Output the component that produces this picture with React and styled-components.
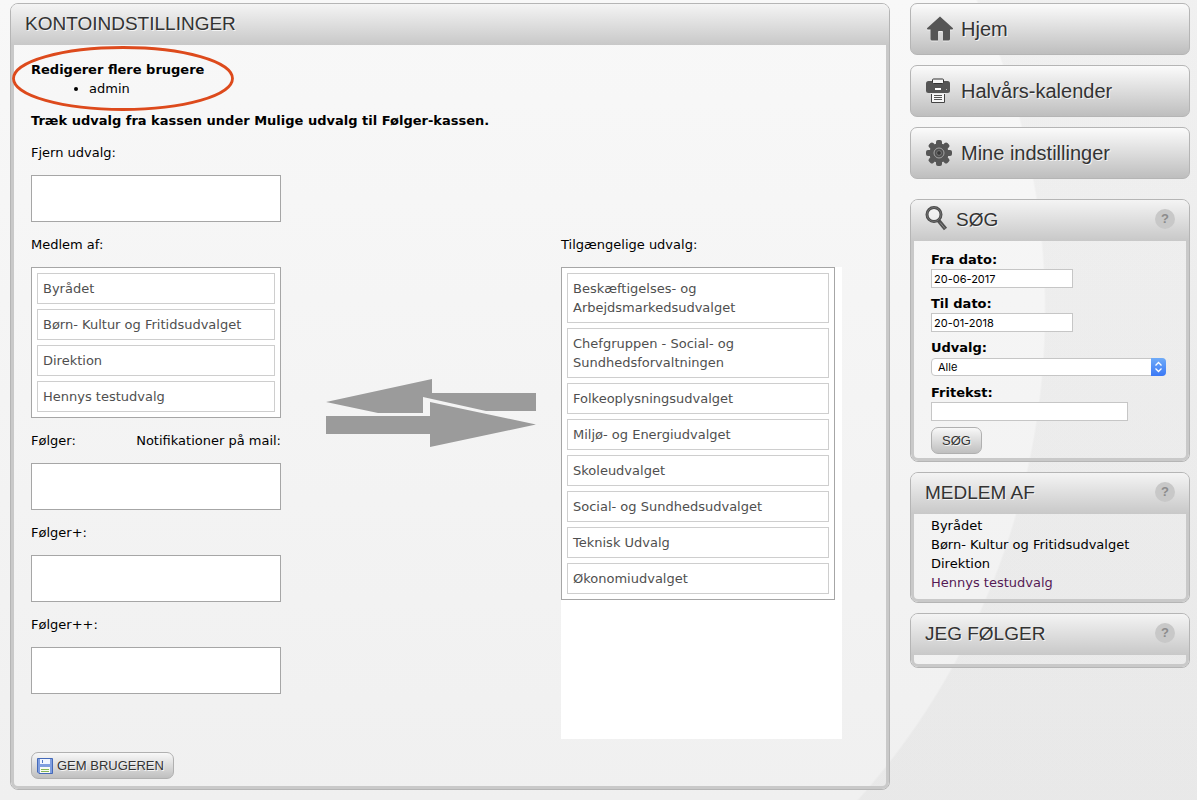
import React from "react";
import styled, { createGlobalStyle, css } from "styled-components";

const GlobalStyle = createGlobalStyle`
  *, *::before, *::after { box-sizing: border-box; }
  html { min-height: 100%; background: #f0f0f0; }
  body {
    margin: 0;
    font-family: "DejaVu Sans", Verdana, sans-serif;
    font-size: 13px;
    line-height: 19px;
    color: #000;
    background:
      radial-gradient(circle at 310px 310px, transparent 734px, rgba(0, 0, 0, 0.03) 736px) no-repeat,
      linear-gradient(#f8f8f8, #f0f0f0);
  }
  h2, p, ul { margin: 0; padding: 0; }
`;

const sans = css`font-family: "Liberation Sans", Arial, sans-serif;`;

const Page = styled.div`
  display: grid;
  grid-template-columns: minmax(0, 1fr) 280px;
  align-items: start;
  gap: 20px;
  padding: 3px 7px 10px 10px;
`;

const Sidebar = styled.aside`
  display: flex;
  flex-direction: column;
  gap: 10px;
`;

const Nav = styled.nav`
  display: flex;
  flex-direction: column;
  gap: 10px;
  margin-bottom: 10px;
`;

const NavLink = styled.a`
  ${sans}
  display: flex;
  align-items: center;
  gap: 7px;
  height: 52px;
  padding: 0 15px;
  border: 1px solid #b5b5b5;
  border-radius: 7px;
  background: linear-gradient(#fbfbfb, #bebebe);
  color: #333;
  font-size: 20px;
  text-decoration: none;
  text-shadow: 1px 1px 0 #f4f4f4;
`;

const Panel = styled.section`
  border: 1px solid #b5b5b5;
  border-radius: 8px;
  overflow: hidden;
`;

const PanelHeader = styled.header`
  display: flex;
  align-items: center;
  gap: 8px;
  height: 41px;
  padding: 0 14px 3px;
  background: linear-gradient(#f4f4f4, #c8c8c8);
`;

const PanelTitle = styled.h2`
  ${sans}
  flex: 1;
  font-size: 19px;
  font-weight: 400;
  color: #333;
  text-shadow: 1px 1px 0 #f4f4f4;
`;

const PanelBody = styled.div`
  min-height: 12px;
  padding: ${(p) => p.$pad || "0"};
  border: 3px solid #c9c9c9;
  border-top: 0;
  border-radius: 0 0 7px 7px;
`;

const HelpButton = styled.button`
  ${sans}
  width: 20px;
  height: 20px;
  padding: 0;
  border: 0;
  border-radius: 50%;
  background: #c8c8c8;
  color: #8c8c8c;
  font-size: 13px;
  font-weight: 700;
  line-height: 20px;
`;

const Intro = styled.div`
  position: relative;
  margin-bottom: 13px;
`;

const Marker = styled.svg`
  position: absolute;
  left: -19px;
  top: -14px;
  pointer-events: none;
`;

const Strong = styled.p`font-weight: 700;`;

const UserList = styled.ul`
  padding-left: 58px;
`;

const Instruction = styled(Strong)`margin-bottom: 13px;`;

const Group = styled.section`
  display: flex;
  flex-direction: column;
  gap: 13px;
  margin-bottom: ${(p) => (p.$last ? "0" : "13px")};
`;

const GroupLabel = styled.div`
  display: flex;
  justify-content: space-between;
  width: 250px;
`;

const DropList = styled.ul`
  display: flex;
  flex-direction: column;
  gap: 5px;
  width: ${(p) => (p.$wide ? "274px" : "250px")};
  min-height: 47px;
  padding: 5px;
  border: 1px solid #a6a6a6;
  background: #fff;
  list-style: none;
`;

const DropItem = styled.li`
  padding: 5px;
  border: 1px solid #cecece;
  background: #fff;
  color: #4f4f4f;
  cursor: move;
`;

const Transfer = styled.div`
  display: grid;
  grid-template-columns: 250px 280px 281px;
  margin-bottom: 13px;
`;

const ArrowCell = styled.div`
  padding: 143px 0 0 44px;
`;

const Available = styled.div`
  min-height: 472px;
  background: #fff;
`;

const ActionButton = styled.button`
  ${sans}
  display: inline-flex;
  align-items: center;
  gap: 3px;
  height: 27px;
  padding: ${(p) => (p.$icon ? "0 9px 0 5px" : "0 10px")};
  border: 1px solid #b0b0b0;
  border-radius: 7px;
  background: linear-gradient(#f8f8f8, #bfbfbf);
  color: #333;
  font-size: 13px;
  text-shadow: 1px 1px 0 #f4f4f4;
`;

const SearchForm = styled.form`
  display: flex;
  flex-direction: column;
  align-items: flex-start;
  gap: 6px;
`;

const Field = styled.div`
  display: flex;
  flex-direction: column;
  width: ${(p) => p.$width};
`;

const FieldLabel = styled.label`font-weight: 700;`;

const control = css`
  width: 100%;
  border: 1px solid #c6c6c6;
  background: #fff;
  color: #000;
  font-family: Inter, sans-serif;
  font-size: 11px;
`;

const TextInput = styled.input`
  ${control}
  height: 19px;
  padding: 1px 2px 0;
`;

const SelectWrap = styled.div`
  position: relative;
  height: 20px;
  padding: 1px 0;
`;

const Select = styled.select`
  ${control}
  display: block;
  height: 18px;
  padding: 0 20px 0 6px;
  border-radius: 4px;
  appearance: none;
`;

const SelectArrow = styled.svg`
  position: absolute;
  right: 0;
  top: 1px;
  pointer-events: none;
`;

const MemberList = styled.ul`list-style: none;`;

const MemberLink = styled.a`
  color: ${(p) => (p.$visited ? "#551a55" : "#000")};
  text-decoration: none;
`;

const HomeIcon = () => (
  <svg width="28" height="28" viewBox="0 0 28 28" aria-hidden="true">
    <path d="M14 1.5 L27 13.3 Q27.3 14.5 26 14.5 H24 V24 Q24 25.5 22.5 25.5 H17 V17 Q17 16 16 16 H13 Q12 16 12 17 V25.5 H6 Q4.5 25.5 4.5 24 V14.5 H2 Q.7 14.5 1 13.3Z" fill="#fff" opacity=".6" transform="translate(0 1)" />
    <path d="M14 1.5 L27 13.3 Q27.3 14.5 26 14.5 H24 V24 Q24 25.5 22.5 25.5 H17 V17 Q17 16 16 16 H13 Q12 16 12 17 V25.5 H6 Q4.5 25.5 4.5 24 V14.5 H2 Q.7 14.5 1 13.3Z" fill="#555" />
  </svg>
);

const PrinterIcon = () => (
  <svg width="28" height="28" viewBox="0 0 28 28" aria-hidden="true">
    <rect x="0" y="4" width="24" height="12" rx="2.5" fill="#555" />
    <rect x="6.500" y="2" width="11" height="4.500" rx="1" fill="#f5f5f5" stroke="#333" />
    <rect x="9" y="11" width="6" height="2" fill="#fff" />
    <rect x="20" y="12" width="1" height="1" fill="#bbb" />
    <path d="M4 16.500 H20" stroke="#e8e8e8" />
    <path d="M5.500 17 V25.500 H18.500 V17" fill="#f7f7f7" stroke="#444" />
    <path d="M8 18.500 H16 M8 20.500 H16 M8 22.500 H16" stroke="#555" />
  </svg>
);

const GearIcon = () => (
  <svg width="28" height="28" viewBox="0 0 28 28" aria-hidden="true">
    <g fill="#565656">
      <circle cx="13" cy="14" r="9.7" />
      {[0, 45, 90, 135, 180, 225, 270, 315].map((a) => (
        <rect key={a} x="10" y="1" width="6" height="7" rx="2" transform={`rotate(${a} 13 14)`} />
      ))}
    </g>
    <circle cx="13" cy="14" r="5" fill="#505050" stroke="#a5a5a5" />
    <circle cx="13" cy="14" r="2.4" fill="#383838" stroke="#8b8b8b" strokeWidth=".7" />
  </svg>
);

const SearchIcon = () => (
  <svg width="23" height="28" viewBox="0 0 23 28" aria-hidden="true">
    <path d="M13.500 15.500 L20.500 24" stroke="#505050" strokeWidth="4" />
    <path d="M15 17.500 L20 23.500" stroke="#8a8a8a" strokeWidth="1" />
    <circle cx="9" cy="9.5" r="7" fill="#fff" fillOpacity=".45" stroke="#4c4c4c" strokeWidth="3" />
    <circle cx="9" cy="9.5" r="7" fill="none" stroke="#888" strokeWidth=".6" />
  </svg>
);

const SaveIcon = () => (
  <svg width="17" height="16" viewBox="0 0 17 16" aria-hidden="true">
    <path d="M.5 .5 H15.5 V15.5 H2 L.5 14Z" fill="#7f9edf" stroke="#4469b8" />
    <rect x="3" y="1" width="10" height="5" fill="#f0f5ff" />
    <rect x="5" y="2" width="1" height="3" fill="#4f75c4" />
    <rect x="3" y="9" width="10" height="6" fill="#f8fbf5" />
    <rect x="4" y="11" width="8" height="1" fill="#86b556" />
    <rect x="4" y="13" width="8" height="1" fill="#86b556" />
  </svg>
);

const ExchangeArrows = () => (
  <svg width="214" height="70" viewBox="0 0 214 70" aria-hidden="true">
    <g fill="#9b9b9b">
      <path d="M1 24 L107 1 V15 H211 V33 H161 L98 19 V35 H53Z" />
      <path d="M1 38 H105 V24 L211 46.500 L105 69 V56 H1Z" />
    </g>
  </svg>
);

const memberOf = ["Byrådet", "Børn- Kultur og Fritidsudvalget", "Direktion", "Hennys testudvalg"];

const available = [
  "Beskæftigelses- og Arbejdsmarkedsudvalget",
  "Chefgruppen - Social- og Sundhedsforvaltningen",
  "Folkeoplysningsudvalget",
  "Miljø- og Energiudvalget",
  "Skoleudvalget",
  "Social- og Sundhedsudvalget",
  "Teknisk Udvalg",
  "Økonomiudvalget",
];

function CommitteeGroup({ label, note, items = [], last }) {
  return (
    <Group $last={last}>
      <GroupLabel>
        <span>{label}</span>
        {note && <span>{note}</span>}
      </GroupLabel>
      <DropList aria-label={label}>
        {items.map((name) => <DropItem key={name}>{name}</DropItem>)}
      </DropList>
    </Group>
  );
}

function TitledPanel({ title, icon, help, pad, children }) {
  return (
    <Panel>
      <PanelHeader>
        {icon}
        <PanelTitle>{title}</PanelTitle>
        {help && <HelpButton type="button">?</HelpButton>}
      </PanelHeader>
      <PanelBody $pad={pad}>{children}</PanelBody>
    </Panel>
  );
}

export default function App() {
  return (
    <>
      <GlobalStyle />
      <Page>
        <main>
          <TitledPanel title="KONTOINDSTILLINGER" pad="15px 17px 7px">
            <Intro>
              <Strong>Redigerer flere brugere</Strong>
              <UserList><li>admin</li></UserList>
              <Marker width="222" height="65" viewBox="0 0 222 65" aria-hidden="true">
                <ellipse cx="111" cy="32.500" rx="109.500" ry="31" fill="none" stroke="#dd4a1c" strokeWidth="2.800" />
              </Marker>
            </Intro>
            <Instruction>Træk udvalg fra kassen under Mulige udvalg til Følger-kassen.</Instruction>
            <CommitteeGroup label="Fjern udvalg:" />
            <Transfer>
              <div>
                <CommitteeGroup label="Medlem af:" items={memberOf} />
                <CommitteeGroup label="Følger:" note="Notifikationer på mail:" />
                <CommitteeGroup label="Følger+:" />
                <CommitteeGroup label="Følger++:" last />
              </div>
              <ArrowCell><ExchangeArrows /></ArrowCell>
              <Group $last>
                <GroupLabel>Tilgængelige udvalg:</GroupLabel>
                <Available>
                  <DropList $wide aria-label="Tilgængelige udvalg">
                    {available.map((name) => <DropItem key={name}>{name}</DropItem>)}
                  </DropList>
                </Available>
              </Group>
            </Transfer>
            <ActionButton type="button" $icon><SaveIcon />GEM BRUGEREN</ActionButton>
          </TitledPanel>
        </main>
        <Sidebar>
          <Nav>
            <NavLink href="#hjem"><HomeIcon />Hjem</NavLink>
            <NavLink href="#kalender"><PrinterIcon />Halvårs-kalender</NavLink>
            <NavLink href="#indstillinger"><GearIcon />Mine indstillinger</NavLink>
          </Nav>
          <TitledPanel title="SØG" icon={<SearchIcon />} help pad="9px 17px 4px">
            <SearchForm onSubmit={(e) => e.preventDefault()}>
              <Field $width="142px">
                <FieldLabel htmlFor="from">Fra dato:</FieldLabel>
                <TextInput id="from" defaultValue="20-06-2017" />
              </Field>
              <Field $width="142px">
                <FieldLabel htmlFor="to">Til dato:</FieldLabel>
                <TextInput id="to" defaultValue="20-01-2018" />
              </Field>
              <Field $width="235px">
                <FieldLabel htmlFor="committee">Udvalg:</FieldLabel>
                <SelectWrap>
                  <Select id="committee" defaultValue="Alle"><option>Alle</option></Select>
                  <SelectArrow width="15" height="18" viewBox="0 0 15 18" aria-hidden="true">
                    <defs>
                      <linearGradient id="blue" x1="0" y1="0" x2="0" y2="1">
                        <stop offset="0" stopColor="#6fabf8" />
                        <stop offset="1" stopColor="#3a78f6" />
                      </linearGradient>
                    </defs>
                    <path d="M0 0 H11 Q15 0 15 4 V14 Q15 18 11 18 H0Z" fill="url(#blue)" />
                    <path d="M4.500 7.500 L7.500 4.500 L10.500 7.500 M4.500 10.500 L7.500 13.500 L10.500 10.500" fill="none" stroke="#fff" strokeWidth="1.300" />
                  </SelectArrow>
                </SelectWrap>
              </Field>
              <Field $width="197px">
                <FieldLabel htmlFor="text">Fritekst:</FieldLabel>
                <TextInput id="text" />
              </Field>
              <ActionButton type="submit">SØG</ActionButton>
            </SearchForm>
          </TitledPanel>
          <TitledPanel title="MEDLEM AF" help pad="2px 17px 7px">
            <MemberList>
              {memberOf.map((name, i) => (
                <li key={name}><MemberLink href="#udvalg" $visited={i === 3}>{name}</MemberLink></li>
              ))}
            </MemberList>
          </TitledPanel>
          <TitledPanel title="JEG FØLGER" help />
        </Sidebar>
      </Page>
    </>
  );
}
